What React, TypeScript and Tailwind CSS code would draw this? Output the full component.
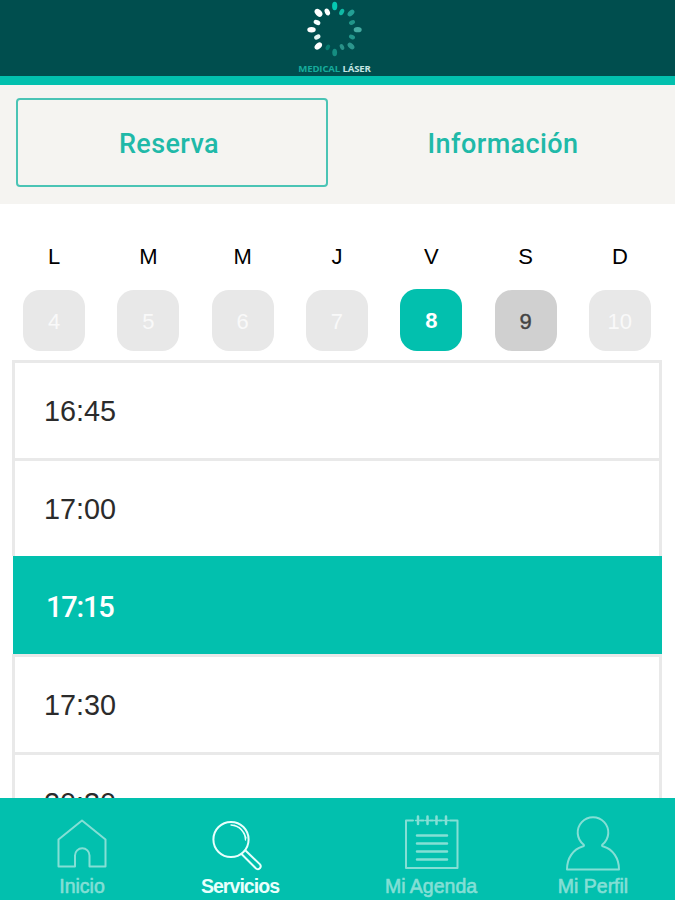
import clsx from "clsx";
import type { ReactNode } from "react";

const DAYS = [
  { letter: "L", day: 4, state: "disabled" },
  { letter: "M", day: 5, state: "disabled" },
  { letter: "M", day: 6, state: "disabled" },
  { letter: "J", day: 7, state: "disabled" },
  { letter: "V", day: 8, state: "selected" },
  { letter: "S", day: 9, state: "available" },
  { letter: "D", day: 10, state: "disabled" },
];

const DAY_STYLES: Record<string, string> = {
  disabled: "mt-px h-[61px] bg-[#e8e8e8] text-[#f9f9f9]",
  selected: "h-[62px] bg-[#02c0ae] pb-0.5 font-bold text-white",
  available: "mt-px h-[61px] bg-[#d0d0d0] text-[#444] [-webkit-text-stroke:0.4px_#444]",
};

const SLOTS = ["16:45", "17:00", "17:15", "17:30", "20:30"];
const SELECTED_SLOT = "17:15";

// Petals run clockwise from the top.
const PETALS = [
  { x: 54.7, y: 6, r: 0, rx: 2.6, ry: 4.2, fill: "#05c9b2" },
  { x: 61.7, y: 12, r: 28, rx: 2.2, ry: 3.4, fill: "#10b9a5" },
  { x: 71, y: 13, r: 45, rx: 2.6, ry: 4, fill: "#239f94" },
  { x: 72, y: 22.5, r: 65, rx: 2.1, ry: 3.2, fill: "#219589" },
  { x: 77.7, y: 29.7, r: 90, rx: 2.6, ry: 4, fill: "#43aaa0" },
  { x: 72, y: 37, r: 115, rx: 2.1, ry: 3.2, fill: "#23968b" },
  { x: 71, y: 46, r: 135, rx: 2.6, ry: 4, fill: "#2c968d" },
  { x: 62, y: 47, r: 152, rx: 2, ry: 3, fill: "#299188" },
  { x: 54.7, y: 52.5, r: 0, rx: 2.4, ry: 3.8, fill: "#158d81" },
  { x: 47.8, y: 47.3, r: 28, rx: 2, ry: 3, fill: "#067c70" },
  { x: 38.3, y: 46, r: 45, rx: 2.9, ry: 4.3, fill: "#fff" },
  { x: 37.3, y: 37, r: 65, rx: 2.3, ry: 3.3, fill: "#e3f4f2" },
  { x: 31.5, y: 29.7, r: 90, rx: 2.7, ry: 4.2, fill: "#fff" },
  { x: 37, y: 22.4, r: 115, rx: 2.4, ry: 3.5, fill: "#f4ffff" },
  { x: 38.5, y: 12.8, r: 135, rx: 3.1, ry: 4.5, fill: "#fff" },
  { x: 47.3, y: 12, r: 152, rx: 2.4, ry: 3.6, fill: "#fff" },
];

function Header() {
  return (
    <header className="flex h-[85px] flex-none flex-col items-center border-b-[9px] border-[#02c0ae] bg-[#004e4e] pr-[6px]">
      <svg width="110" height="62" viewBox="0 0 110 62" className="flex-none">
        {PETALS.map((p, i) => (
          <ellipse
            key={i}
            cx={p.x}
            cy={p.y}
            rx={p.rx}
            ry={p.ry}
            fill={p.fill}
            transform={`rotate(${p.r} ${p.x} ${p.y})`}
          />
        ))}
      </svg>
      <p className="mt-px font-['Open_Sans',sans-serif] text-[9.6px] leading-3 font-bold tracking-[-0.15px] whitespace-nowrap text-[#c5e6e3]">
        <span className="text-[#16ab9b]">MEDICAL</span> LÁSER
      </p>
    </header>
  );
}

function Tabs() {
  return (
    <div className="flex h-[119px] flex-none bg-[#f5f4f1] pt-[13px] pl-4 font-[Roboto,sans-serif] text-[27px] font-medium tracking-[0.4px] text-[#20b9a8]">
      <button className="h-[89px] w-[312px] flex-none rounded border-2 border-[#4ac4b5] pt-[3px] pr-1.5">
        Reserva
      </button>
      <button className="h-[89px] flex-1 pt-[3px] pl-[3px]">Información</button>
    </div>
  );
}

function WeekPicker() {
  return (
    <div className="ml-[7px] grid h-[156px] w-[660px] flex-none grid-cols-7 pt-[40px]">
      {DAYS.map(({ letter, day, state }) => (
        <div key={day} className="flex flex-col items-center">
          <span className="h-[45px] text-[22px] leading-[26px] text-black">{letter}</span>
          <span
            className={clsx(
              "flex w-[62px] items-center justify-center rounded-[17px] pt-0.5 text-[22px]",
              DAY_STYLES[state],
            )}
          >
            {day}
          </span>
        </div>
      ))}
    </div>
  );
}

function SlotList() {
  return (
    <ul className="mr-[13px] ml-3 min-h-0 flex-1 overflow-hidden">
      {SLOTS.map((slot) => {
        const selected = slot === SELECTED_SLOT;
        return (
          <li
            key={slot}
            className={clsx(
              "flex h-[98px] items-center",
              selected
                ? "ml-px bg-[#02c0ae] pt-[5px] pl-[33px] font-[Roboto,sans-serif] text-[29px] font-medium tracking-[-1.2px] text-white"
                : "border-x-3 border-t-3 border-[#e9e9e9] pt-0.5 pl-[29px] text-[28.8px] text-[#2b2b2b]",
            )}
          >
            {slot}
          </li>
        );
      })}
    </ul>
  );
}

function NavItem({ label, active, className, children }: {
  label: string;
  active?: boolean;
  className: string;
  children: ReactNode;
}) {
  return (
    <button
      className={clsx(
        "flex flex-none flex-col items-center pt-[14px]",
        active ? "text-[#e8fffc]" : "text-[#84dfd5]",
        className,
      )}
    >
      <svg
        width="60"
        height="62"
        viewBox="0 0 60 62"
        fill="none"
        stroke="currentColor"
        strokeWidth="2"
        strokeLinejoin="round"
        strokeLinecap="round"
        className="flex-none"
      >
        {children}
      </svg>
      <span
        className={clsx(
          "text-[19.5px] leading-6 whitespace-nowrap",
          active
            ? "font-bold tracking-[-0.95px]"
            : "[-webkit-text-stroke:0.6px_currentColor]",
        )}
      >
        {label}
      </span>
    </button>
  );
}

function BottomNav() {
  return (
    <nav className="flex h-[102px] flex-none bg-[#02c0ae]">
      <NavItem label="Inicio" className="w-[164px]">
        <path d="M6.5 54.5V27.5L30 8.500 53.500 27.500V54.500H37.500V43.500a7 7 0 0 0-14.500 0V54.500Z" />
      </NavItem>
      <NavItem label="Servicios" active className="w-[152px]">
        <circle cx="21" cy="27.500" r="17.600" />
        <path d="M21 13C29 13.500 35 19.500 35.500 28M24 13.200C31 15.500 34.500 20 36 26" strokeWidth="1.300" />
        <path d="M31.500 42 46 56.500q2.500 1.500 4-.300t0-3.800L35.500 38.500" />
      </NavItem>
      <NavItem label="Mi Agenda" className="w-[230px]">
        <path d="M12 8.500H5V56H56.500V8.500H49M20 8.500H22.500M29.500 8.500H32M38.500 8.500H41" />
        <path d="M17 4.500V12M26.500 4.500V12M35.500 4.500V12M45 4.500V12" strokeWidth="2.500" />
        <path d="M14.500 8.500H19.500M24 8.500H29M33 8.500H38M42.500 8.500H47.500" strokeWidth="1.500" />
        <path d="M16 23.500H46M16 31.500H46M16 39.500H46M16 47.500H46" strokeWidth="2.500" />
      </NavItem>
      <NavItem label="Mi Perfil" className="w-[94px]">
        <path d="M20.500 32.500A15.300 15.300 0 1 1 39.500 32.500C38.500 33.500 39 34 40.500 34.500C50 37.500 56 46 56 57.500H4C4 46 10 37.500 19.500 34.500C21 34 21.500 33.500 20.500 32.500Z" />
      </NavItem>
    </nav>
  );
}

export default function App() {
  return (
    <div className="flex h-[900px] w-[675px] flex-col overflow-hidden bg-white font-['Liberation_Sans',Arial,sans-serif]">
      <Header />
      <Tabs />
      <WeekPicker />
      <SlotList />
      <BottomNav />
    </div>
  );
}
